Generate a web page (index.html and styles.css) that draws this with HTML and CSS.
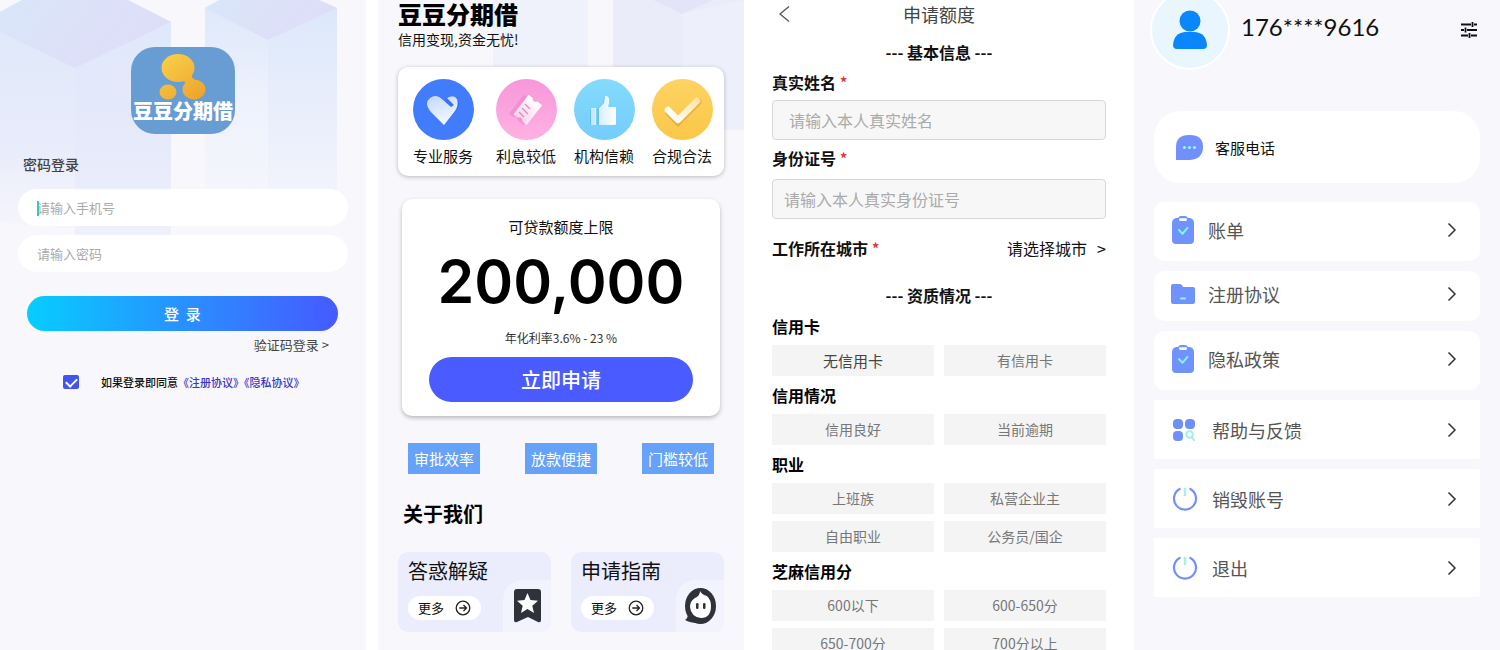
FILE: index.html
```html
<!DOCTYPE html>
<html lang="zh-CN">
<head>
<meta charset="utf-8">
<meta name="viewport" content="width=device-width, initial-scale=1">
<title>豆豆分期借</title>
<link rel="stylesheet" href="styles.css">
</head>
<body>
<svg class="defs" width="0" height="0" aria-hidden="true">
  <defs>
    <linearGradient id="gold" gradientUnits="userSpaceOnUse" x1="4" y1="0" x2="40" y2="46"><stop offset="0" stop-color="#fbd048"/><stop offset="1" stop-color="#eca42c"/></linearGradient>
    <linearGradient id="face" x1="0" y1="0" x2="1" y2="0.3"><stop offset="0" stop-color="#d9e6f8"/><stop offset="1" stop-color="#dfddf8"/></linearGradient>
    <linearGradient id="side" x1="0" y1="0" x2="0" y2="1"><stop offset="0" stop-color="#dde9fa"/><stop offset="0.6" stop-color="#e8ebfa"/><stop offset="1" stop-color="#f7f7fc"/></linearGradient>
    <linearGradient id="sideRight" x1="0" y1="0" x2="0" y2="1"><stop offset="0" stop-color="#dfe8fa"/><stop offset="0.6" stop-color="#e7eafa"/><stop offset="1" stop-color="#eef0fb"/></linearGradient>
    <linearGradient id="fade" x1="0" y1="0" x2="0" y2="1"><stop offset="0" stop-color="#dce8fa"/><stop offset="0.5" stop-color="#e9eefb"/><stop offset="1" stop-color="#f4f5fc"/></linearGradient>
    <linearGradient id="fadeLeft" x1="0" y1="0" x2="0" y2="1"><stop offset="0" stop-color="#dde8fa"/><stop offset="0.5" stop-color="#eef2fc"/><stop offset="1" stop-color="#f7f7fc"/></linearGradient>
    <linearGradient id="sheenBack" x1="0" y1="0" x2="1" y2="0"><stop offset="0" stop-color="#fff" stop-opacity="0.6"/><stop offset="1" stop-color="#fff" stop-opacity="1"/></linearGradient>
    <linearGradient id="heart" x1="0.1" y1="0" x2="0.5" y2="1"><stop offset="0" stop-color="#c3d8fd"/><stop offset="1" stop-color="#f4f8ff"/></linearGradient>
    <linearGradient id="tick" gradientUnits="userSpaceOnUse" x1="16" y1="0" x2="48" y2="0"><stop offset="0" stop-color="#fffdf8"/><stop offset="0.4" stop-color="#fff8e8"/><stop offset="1" stop-color="#fde3a0"/></linearGradient>
    <symbol id="i-chevron" viewBox="0 0 10 16"><path d="M1.500 1.500 8 8l-6.500 6.500" fill="none" stroke="#333" stroke-width="1.500"/></symbol>
    <symbol id="i-more" viewBox="0 0 16 16"><circle cx="8" cy="8" r="6.800" fill="none" stroke="#222" stroke-width="1.300"/><path d="M4.300 8h7M8.500 5l3 3-3 3" fill="none" stroke="#222" stroke-width="1.300"/></symbol>
    <symbol id="i-clip" viewBox="0 0 24 28"><path d="M7 2Q8 0 10 0h4q2 0 3 2h2q4 1 4 5v17q0 4-4 4H5q-4 0-4-4V7q0-4 4-5z" fill="#6f92fc"/><rect x="8" y="2.300" width="8" height="2.600" rx="1.300" fill="#fff"/><path d="m8 14 3.500 3.800 5-6" fill="none" stroke="#83f3f0" stroke-width="2" stroke-linecap="round"/></symbol>
    <symbol id="i-folder" viewBox="0 0 24 28"><path d="M0 6q0-2 2-2h7q2 0 3 3h10q2 0 2 2v13q0 2-2 2H2q-2 0-2-2z" fill="#6f92fc"/><rect x="9" y="17.500" width="6" height="2" rx="1" fill="#83f3f0"/></symbol>
    <symbol id="i-apps" viewBox="0 0 26 28"><rect x="1" y="3" width="10" height="10" rx="4" fill="#6f8ffb"/><rect x="13" y="3" width="10" height="10" rx="4" fill="#6f8ffb"/><rect x="1" y="15" width="10" height="10" rx="4" fill="#6f8ffb"/><circle cx="17.500" cy="18.500" r="3.200" fill="none" stroke="#9ff1e8" stroke-width="2"/><path d="m19.500 21 3 4" stroke="#9ff1e8" stroke-width="2"/></symbol>
    <symbol id="i-power" viewBox="0 0 26 28"><path d="M8.500 3.600A11 11 0 1 0 17.500 3.600" fill="none" stroke="#7192f2" stroke-width="2.200"/><path d="M13 3v8" stroke="#a5f1ea" stroke-width="2.500"/></symbol>
  </defs>
</svg>

<main class="screens">
  <section class="screen login">
    <svg class="art" viewBox="0 0 366 260" aria-hidden="true">
      <path d="M0 12 22 0h106l43 22v216L0 222z" fill="url(#side)"/>
      <path d="M75 68 171 22v216H75z" fill="url(#sideRight)"/>
      <path d="M0 12 22 0h106l43 22-96 46L0 32z" fill="url(#face)"/>
      <path d="m205 8 14-8h100l18 8v205H205z" fill="url(#fadeLeft)"/>
      <path d="m268 40 69-32v205h-69z" fill="url(#fade)"/>
      <path d="m205 8 14-8h100l18 8-69 32z" fill="url(#face)"/>
    </svg>
    <div class="logo">
      <svg class="logo-mark" viewBox="0 0 48 46" aria-hidden="true"><g fill="url(#gold)"><ellipse cx="19" cy="14" rx="16.500" ry="14"/><ellipse cx="35" cy="35.500" rx="11.500" ry="10"/><ellipse cx="9" cy="38" rx="8.500" ry="7.500"/><path d="M34 19q-3 4 2 7l-9 5q0-4-4-4z"/></g></svg>
      <span class="logo-name">豆豆分期借</span>
    </div>
    <form class="login-form">
      <h2 class="login-title">密码登录</h2>
      <div class="login-field focused"><input type="tel" placeholder="请输入手机号" aria-label="手机号"></div>
      <div class="login-field"><input type="password" placeholder="请输入密码" aria-label="密码"></div>
      <button class="login-button" type="button">登&nbsp; 录</button>
      <a class="code-link" href="#code">验证码登录 &gt;</a>
      <div class="agree">
        <input type="checkbox" id="agree" checked>
        <p><label for="agree">如果登录即同意</label><a href="#terms">《注册协议》</a><a href="#privacy">《隐私协议》</a></p>
      </div>
    </form>
  </section>

  <section class="screen home">
    <svg class="art" viewBox="0 0 366 260" aria-hidden="true">
      <path d="M115 0h95v70h-95z" fill="#f0f2fb"/>
      <path d="M235 0h131v120H235z" fill="#ebecfa"/>
      <path d="M275 0h60l-31 14z" fill="#e3e4f8"/>
      <path d="M304 14 366 0v130h-62z" fill="#edeffb"/>
    </svg>
    <h1 class="brand">豆豆分期借</h1>
    <p class="slogan">信用变现,资金无忧!</p>
    <ul class="features">
      <li><svg class="feature-icon heart" viewBox="0 0 61 61" aria-hidden="true"><path d="M33 19q8-4 12 1 3 6-2 12L32 44z" fill="#2c64e8" opacity="0.4"/><path d="M31 46 17 32q-6-8 0-13t13 2l8 7 3-2-7-7q7-4 10 1 2 6-2 12z" fill="url(#heart)"/></svg>专业服务</li>
      <li><svg class="feature-icon ticket" viewBox="0 0 61 61" aria-hidden="true"><g transform="rotate(-52 31 31)"><path d="M19 22h24v5q-4 3 0 6v7H19v-6q3-4 0-7z" fill="#e878c0" opacity="0.45" transform="translate(-2 -3)"/><path d="M19 23h25v5q-4 3 0 6v6H19v-5q4-4 0-7z" fill="url(#sheenBack)"/></g><path d="m23 33 5 5M26 29l6 6M29 25l5 5" stroke="#e58fc6" stroke-width="1.500"/></svg>利息较低</li>
      <li><svg class="feature-icon thumb" viewBox="0 0 61 61" aria-hidden="true"><path d="M16 30h5v16h-5zM23 30l6-6 1-6q5-2 4 8l-1 3h8v17H23z" fill="#3d9fd8" opacity="0.3"/><path d="M17 29h5v17h-5zM25 29l5-5 1-7q5-1 4 7l-1 4h8v17q0 1-2 1H25z" fill="url(#sheenBack)"/></svg>机构信赖</li>
      <li><svg class="feature-icon check" viewBox="0 0 61 61" aria-hidden="true"><path d="m17 34 9 9 20-20" fill="none" stroke="#bd851b" stroke-opacity="0.35" stroke-width="7" stroke-linecap="round"/><path d="m16 31 10 10 19-19" fill="none" stroke="url(#tick)" stroke-width="6.500" stroke-linejoin="round" stroke-linecap="round"/></svg>合规合法</li>
    </ul>
    <div class="offer">
      <p class="offer-title">可贷款额度上限</p>
      <strong class="offer-amount">200,000</strong>
      <p class="offer-rate">年化利率3.6% - 23 %</p>
      <button class="offer-button" type="button">立即申请</button>
    </div>
    <ul class="tags"><li>审批效率</li><li>放款便捷</li><li>门槛较低</li></ul>
    <h2 class="about">关于我们</h2>
    <div class="guides">
      <article class="guide">
        <h3>答惑解疑</h3>
        <a class="more" href="#faq">更多<svg width="16" height="16" aria-hidden="true"><use href="#i-more"/></svg></a>
        <span class="guide-icon"><svg width="27" height="34" viewBox="0 0 27 34" aria-hidden="true"><path d="M0 3q0-3 3-3h21q3 0 3 3v28q0 3-3 2l-10-5-11 5q-3 1-3-2z" fill="#2f3238"/><path d="m13.500 4 3 7 7.500.700-5.700 5 1.700 7.300-6.500-4-6.500 4 1.700-7.300-5.700-5 7.500-.700z" fill="#fff"/></svg></span>
      </article>
      <article class="guide">
        <h3>申请指南</h3>
        <a class="more" href="#guide">更多<svg width="16" height="16" aria-hidden="true"><use href="#i-more"/></svg></a>
        <span class="guide-icon"><svg width="32" height="36" viewBox="0 0 32 36" aria-hidden="true"><ellipse cx="16.500" cy="18" rx="15.500" ry="18" fill="#2f3238"/><path d="M4 26q0 4-3 6 5 3 13 3z" fill="#2f3238"/><path d="M16 3q2 4 7 5 4 4 4 10Q27 30 17 30 7 29 6 19q0-6 5-9 5-2 5-7z" fill="#fff"/><rect x="12" y="15" width="2.500" height="6" rx="1.200" fill="#2f3238"/><rect x="19" y="15" width="2.500" height="6" rx="1.200" fill="#2f3238"/></svg></span>
      </article>
    </div>
  </section>

  <section class="screen apply">
    <header class="apply-bar">
      <a href="#back" aria-label="返回"><svg width="12" height="18" viewBox="0 0 12 18" aria-hidden="true"><path d="M11 1.500 2 9l9 7.500" fill="none" stroke="#555" stroke-width="1.300"/></svg></a>
      <h1>申请额度</h1>
    </header>
    <form class="apply-form">
      <h2 class="part">--- 基本信息 ---</h2>
      <label class="field-label field-label-name" for="name">真实姓名 <em>*</em></label>
      <input class="field field-name" id="name" type="text" placeholder="请输入本人真实姓名">
      <label class="field-label field-label-id" for="idno">身份证号 <em>*</em></label>
      <input class="field" id="idno" type="text" placeholder="请输入本人真实身份证号">
      <div class="city">
        <span class="field-label">工作所在城市 <em>*</em></span>
        <button type="button">请选择城市<span>&gt;</span></button>
      </div>
      <h2 class="part">--- 资质情况 ---</h2>
      <fieldset>
        <legend>信用卡</legend>
        <div class="options">
          <label><input type="radio" name="card" checked>无信用卡</label>
          <label><input type="radio" name="card">有信用卡</label>
        </div>
      </fieldset>
      <fieldset>
        <legend>信用情况</legend>
        <div class="options">
          <label><input type="radio" name="credit">信用良好</label>
          <label><input type="radio" name="credit">当前逾期</label>
        </div>
      </fieldset>
      <fieldset>
        <legend>职业</legend>
        <div class="options">
          <label><input type="radio" name="job">上班族</label>
          <label><input type="radio" name="job">私营企业主</label>
          <label><input type="radio" name="job">自由职业</label>
          <label><input type="radio" name="job">公务员/国企</label>
        </div>
      </fieldset>
      <fieldset>
        <legend>芝麻信用分</legend>
        <div class="options">
          <label><input type="radio" name="score">600以下</label>
          <label><input type="radio" name="score">600-650分</label>
          <label><input type="radio" name="score">650-700分</label>
          <label><input type="radio" name="score">700分以上</label>
        </div>
      </fieldset>
    </form>
  </section>

  <section class="screen profile">
    <header class="user">
      <span class="avatar"><svg width="34" height="40" viewBox="0 0 34 40" aria-hidden="true"><circle cx="17" cy="11" r="10.500" fill="#0a86ff"/><path d="M0 35Q1 23 12 22h10q11 1 12 13 0 4-4 4H4q-4 0-4-4z" fill="#0a86ff"/></svg></span>
      <span class="phone">176****9616</span>
      <button type="button" aria-label="设置"><svg width="16" height="16" viewBox="0 0 16 16" aria-hidden="true"><path d="M0 2.500h10M13 2.500h3M11.500 0v5M0 8h3M6 8h10M4.500 5.500v5M0 13.500h7M10 13.500h6M8.500 11v5" fill="none" stroke="#111" stroke-width="1.800"/></svg></button>
    </header>
    <a class="service" href="#service">
      <svg width="27" height="25" viewBox="0 0 27 25" aria-hidden="true"><path d="M0 25V12Q0 0 13 0h1q13 0 13 12T14 25z" fill="#7190fb"/><g fill="#93f2ec"><circle cx="8.500" cy="12.500" r="1.600"/><circle cx="13.500" cy="12.500" r="1.600"/><circle cx="18.500" cy="12.500" r="1.600"/></g></svg>
      客服电话
    </a>
    <nav class="menu">
      <a class="item rounded" href="#bill"><svg width="24" height="28" aria-hidden="true"><use href="#i-clip"/></svg><span>账单</span><svg width="10" height="16" aria-hidden="true"><use href="#i-chevron"/></svg></a>
      <a class="item rounded compact" href="#terms"><svg width="24" height="28" aria-hidden="true"><use href="#i-folder"/></svg><span>注册协议</span><svg width="10" height="16" aria-hidden="true"><use href="#i-chevron"/></svg></a>
      <a class="item rounded" href="#privacy"><svg width="24" height="28" aria-hidden="true"><use href="#i-clip"/></svg><span>隐私政策</span><svg width="10" height="16" aria-hidden="true"><use href="#i-chevron"/></svg></a>
      <a class="item wide" href="#help"><svg width="26" height="28" aria-hidden="true"><use href="#i-apps"/></svg><span>帮助与反馈</span><svg width="10" height="16" aria-hidden="true"><use href="#i-chevron"/></svg></a>
      <a class="item wide" href="#delete"><svg width="26" height="28" aria-hidden="true"><use href="#i-power"/></svg><span>销毁账号</span><svg width="10" height="16" aria-hidden="true"><use href="#i-chevron"/></svg></a>
      <a class="item wide" href="#logout"><svg width="26" height="28" aria-hidden="true"><use href="#i-power"/></svg><span>退出</span><svg width="10" height="16" aria-hidden="true"><use href="#i-chevron"/></svg></a>
    </nav>
  </section>
</main>
</body>
</html>
```
FILE: styles.css
```css
* { box-sizing: border-box; }

body, h1, h2, h3, p, ul, fieldset { margin: 0; padding: 0; }

body {
  background: #fff;
  color: #111;
  font-family: "Noto Sans CJK SC", sans-serif;
}

ul { list-style: none; }
fieldset { border: 0; min-width: 0; }
legend { padding: 0; }
a { color: inherit; text-decoration: none; }
input, button { font-family: inherit; }
button { border: 0; padding: 0; background: none; color: inherit; cursor: pointer; }
svg { flex: none; }

.defs { position: absolute; }

.screens {
  display: grid;
  grid-template-columns: repeat(4, minmax(0, 1fr));
  gap: 12px;
  height: 100vh;
  overflow: hidden;
}

.screen {
  position: relative;
  z-index: 0;
  background: #f7f7fc;
}

.art {
  position: absolute;
  z-index: -1;
  top: 0;
  left: 0;
  width: 100%;
}

/* Login */
.login { padding: 47px 18px 0; }

.logo {
  display: flex;
  flex-direction: column;
  align-items: center;
  width: 104px;
  height: 87px;
  margin: 0 auto;
  padding-top: 7px;
  border-radius: 24px;
  background: #689dd3;
}

.logo-mark { width: 48px; height: 46px; }

.logo-name {
  color: #fff;
  font-size: 20px;
  line-height: 22px;
  font-weight: 900;
  white-space: nowrap;
}

.login-form { display: flex; flex-direction: column; }

.login-title {
  margin: 18px 5px 13px;
  color: #444;
  font-size: 14px;
  line-height: 24px;
  font-weight: 500;
}

.login-field { position: relative; margin-bottom: 9px; }

.login-field input {
  display: block;
  width: 100%;
  height: 37px;
  padding: 0 19px;
  border: 0;
  border-radius: 19px;
  background: #fff;
  font-size: 13px;
}

.login-field input::placeholder { color: #aaa; }

.focused::before {
  content: "";
  position: absolute;
  left: 19px;
  top: 12px;
  width: 2px;
  height: 15px;
  background: #2fd0a8;
}

.login-button {
  height: 35px;
  margin: 15px 10px 4px 9px;
  border-radius: 18px;
  background: linear-gradient(90deg, #06cdff, #2c8bff 55%, #465aff);
  color: #fff;
  font-size: 15px;
  font-weight: 500;
}

.code-link {
  align-self: flex-end;
  margin-right: 19px;
  color: #444;
  font-size: 13px;
  line-height: 20px;
}

.agree {
  display: flex;
  align-items: center;
  gap: 22px;
  margin: 17px 0 0 45px;
  font-size: 11px;
  line-height: 20px;
  font-weight: 500;
  white-space: nowrap;
}

.agree input {
  flex: none;
  width: 16px;
  height: 14px;
  margin: 0;
  appearance: none;
  border-radius: 2px;
  background: #4353f0;
}

.agree input:checked::before {
  content: "";
  display: block;
  width: 9px;
  height: 5px;
  margin: 3px auto 0;
  border: solid #fff;
  border-width: 0 0 2px 2px;
  transform: rotate(-45deg);
}

.agree a { color: #3a35c8; }

/* Home */
.home { padding: 0 20px; }

.brand {
  color: #000;
  font-size: 24px;
  line-height: 28px;
  font-weight: 900;
}

.slogan { font-size: 14px; line-height: 22px; }

.features {
  display: grid;
  grid-template-columns: 83fr 78fr 78fr 61fr;
  margin-top: 17px;
  padding: 12px 11px 9px 15px;
  border-radius: 10px;
  background: #fff;
  box-shadow: 0 1px 4px rgba(0, 0, 0, 0.25);
  font-size: 15px;
  line-height: 22px;
  white-space: nowrap;
}

.feature-icon {
  display: block;
  width: 61px;
  height: 61px;
  margin-bottom: 5px;
  border-radius: 50%;
}

.heart { background: #407cfb; }
.ticket { background: linear-gradient(#f797da, #ffb1e2); }
.thumb { background: linear-gradient(#84dbfc, #74ccfb); }
.check { background: linear-gradient(#fdd362, #fac748); }

.offer {
  display: flex;
  flex-direction: column;
  margin: 23px 4px 0;
  padding: 17px 27px 14px;
  border-radius: 10px;
  background: #fff;
  box-shadow: 0 2px 4px rgba(0, 0, 0, 0.25);
  text-align: center;
}

.offer-title { font-size: 15px; line-height: 22px; }

.offer-amount {
  margin: 14px 0 16px;
  color: #000;
  font-family: Inter, sans-serif;
  font-size: 59px;
  line-height: 60px;
  font-weight: 600;
}

.offer-rate { color: #333; font-size: 12px; line-height: 20px; }

.offer-button {
  height: 45px;
  margin-top: 9px;
  border-radius: 23px;
  background: #4a5bff;
  color: #fff;
  font-size: 20px;
  font-weight: 500;
}

.tags {
  display: flex;
  justify-content: space-between;
  margin: 27px 10px 25px;
}

.tags li {
  padding: 0 6px;
  background: #66a2f9;
  color: #fff;
  font-size: 15px;
  line-height: 31px;
}

.about {
  margin: 0 5px 23px;
  color: #000;
  font-size: 20px;
  line-height: 30px;
  font-weight: 700;
}

.guides {
  display: grid;
  grid-template-columns: 1fr 1fr;
  gap: 20px;
}

.guide {
  position: relative;
  z-index: 0;
  padding: 5px 10px 12px;
  border-radius: 10px;
  background: #ecedfc;
  overflow: hidden;
}

.guide h3 { font-size: 20px; line-height: 28px; font-weight: 400; }

.more {
  display: inline-flex;
  align-items: center;
  gap: 11px;
  margin-top: 11px;
  padding: 0 10px;
  border-radius: 12px;
  background: #fff;
  font-size: 13px;
  line-height: 24px;
  vertical-align: top;
}

.guide-icon {
  position: absolute;
  z-index: -1;
  right: 0;
  bottom: 0;
  display: grid;
  place-items: center;
  width: 48px;
  height: 52px;
  border-top-left-radius: 20px;
  background: #f2f3fd;
}

/* Application form */
.apply { padding: 0 16px; background: #fff; }

.apply-bar {
  display: grid;
  grid-template-columns: 24px 1fr 24px;
  align-items: center;
  height: 28px;
  padding: 0 6px;
}

.apply-bar a { line-height: 0; }

.apply-bar h1 {
  color: #444;
  font-size: 18px;
  line-height: 28px;
  font-weight: 400;
  text-align: center;
}

.apply-form { display: flex; flex-direction: column; }

.part {
  margin-top: 12px;
  color: #111;
  font-size: 16px;
  line-height: 24px;
  font-weight: 700;
  text-align: center;
}

.field-label {
  font-size: 16px;
  line-height: 30px;
  font-weight: 700;
}

.field-label em {
  color: #d9333f;
  font-style: normal;
  font-weight: 500;
}

.field-label-name { margin: 3px 0; }
.field-label-id { margin: 3px 0 6px; }

.field {
  width: 100%;
  height: 40px;
  padding: 0 11px;
  border: 1px solid #d8d8d8;
  border-radius: 4px;
  background: #f7f7f7;
  font-size: 16px;
}

.field-name { padding: 0 16px; }
.field::placeholder { color: #aaa; }

.city {
  display: flex;
  justify-content: space-between;
  align-items: center;
  margin: 14px 0 8px;
}

.city button {
  display: flex;
  gap: 10px;
  font-size: 16px;
  line-height: 30px;
}

.apply-form legend {
  color: #000;
  font-size: 16px;
  line-height: 38px;
  font-weight: 700;
}

.options {
  display: grid;
  grid-template-columns: 1fr 1fr;
  gap: 7px 10px;
}

.options label {
  display: flex;
  justify-content: center;
  background: #f4f4f4;
  color: #777;
  font-size: 14px;
  line-height: 31px;
}

.options label:has(input:checked) { color: #444; font-size: 15px; }

.options input { appearance: none; width: 0; margin: 0; }

/* Profile */
.profile { padding: 0 20px; }

.user {
  display: flex;
  align-items: center;
  margin: -10px 3px 41px -4px;
}

.avatar {
  display: grid;
  place-items: center;
  width: 80px;
  height: 80px;
  border: 2px solid #fff;
  border-radius: 50%;
  background: #e9f6fe;
}

.phone {
  flex: 1;
  padding: 0 0 6px 11px;
  font-family: Lato, sans-serif;
  font-size: 24px;
  line-height: 30px;
}

.user button { line-height: 0; }

.service {
  display: flex;
  align-items: center;
  gap: 12px;
  height: 72px;
  padding: 0 22px;
  border-radius: 26px;
  background: #fff;
  font-size: 15px;
}

.menu {
  display: grid;
  gap: 10px;
  margin-top: 19px;
}

.item {
  display: flex;
  align-items: center;
  gap: 13px;
  height: 59px;
  padding: 0 23px 4px 17px;
  border-radius: 2px;
  background: #fff;
  color: #555;
  font-size: 18px;
}

.item span { flex: 1; }
.rounded { border-radius: 10px; }
.compact { height: 50px; }
.wide { gap: 14px; padding: 0 23px 0 18px; }
```
